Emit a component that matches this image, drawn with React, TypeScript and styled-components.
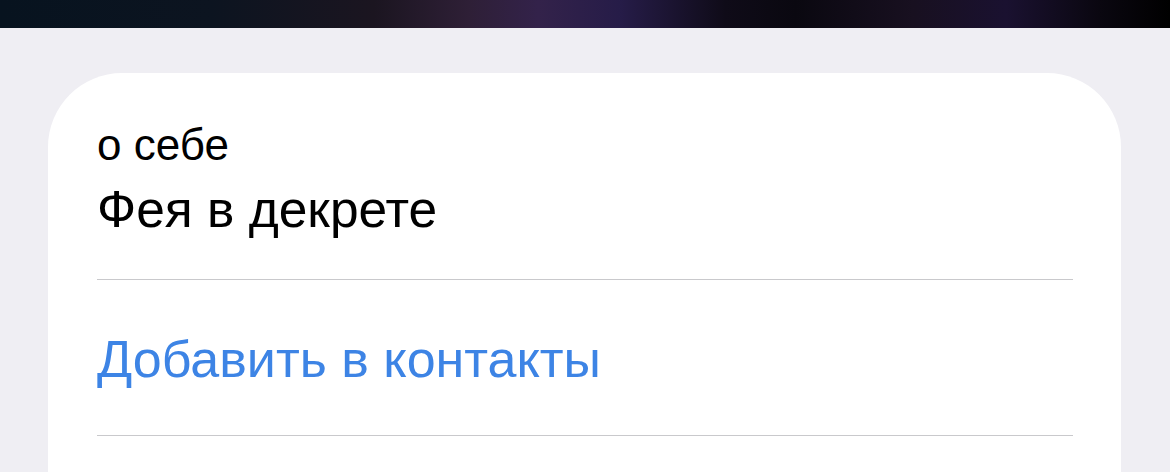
import { createGlobalStyle, styled } from "styled-components";

const GlobalStyle = createGlobalStyle`
  html, body {
    margin: 0;
    padding: 0;
    background: #efeef3;
    font-family: "Liberation Sans", Arial, "Noto Sans", sans-serif;
    -webkit-font-smoothing: antialiased;
  }
`;

const App = () => {
  return (
    <Screen>
      <GlobalStyle />
      <TopBar />
      <Page>
        <Card>
          <InfoBlock>
            <Label>о себе</Label>
            <Value>Фея в декрете</Value>
          </InfoBlock>
          <ActionRow>
            <ActionText>Добавить в контакты</ActionText>
          </ActionRow>
          <ActionRow $empty />
        </Card>
      </Page>
    </Screen>
  );
};

const Screen = styled.div`
  width: 1170px;
  height: 472px;
  overflow: hidden;
  background: #efeef3;
`;

const TopBar = styled.div`
  height: 28px;
  background: linear-gradient(
    90deg,
    #07131f 0%,
    #0c1420 18%,
    #1b1520 32%,
    #2e1f36 40%,
    #33224a 46%,
    #261c48 53%,
    #0f0b18 62%,
    #0a0810 68%,
    #181020 78%,
    #1a1130 86%,
    #0a0710 94%,
    #000000 100%
  );
`;

const Page = styled.div`
  padding: 45px 49px 0 48px;
`;

const Card = styled.div`
  background: #ffffff;
  border-radius: 74px 74px 0 0;
  padding: 46px 48px 0 49px;
  min-height: 400px;
`;

const InfoBlock = styled.div`
  display: flex;
  flex-direction: column;
  gap: 8px;
  padding-bottom: 40px;
  border-bottom: 1px solid #c9c9cc;
`;

const Label = styled.div`
  font-size: 44px;
  line-height: 52px;
  color: #000000;
`;

const Value = styled.div`
  font-size: 51.5px;
  line-height: 60px;
  color: #000000;
`;

const ActionRow = styled.div<{ $empty?: boolean }>`
  display: flex;
  align-items: center;
  height: 155px;
  border-bottom: ${(p) => (p.$empty ? "none" : "1px solid #c9c9cc")};
`;

const ActionText = styled.span`
  font-size: 52px;
  line-height: 60px;
  color: #3d84e5;
  margin-top: 2px;
`;

export default App;
